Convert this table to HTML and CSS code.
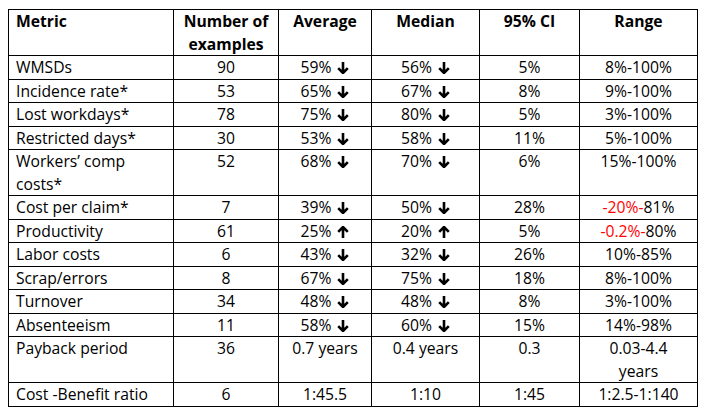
FILE: index.html
```html
<!DOCTYPE html>
<html lang="en">
<head>
<meta charset="utf-8">
<title>Ergonomics outcomes</title>
<link rel="stylesheet" href="styles.css">
</head>
<body>
<div class="page">
  <div class="table" role="table">
    <div class="row head" role="row">
      <div class="cell metric">Metric</div>
      <div class="cell">Number of examples</div>
      <div class="cell">Average</div>
      <div class="cell">Median</div>
      <div class="cell">95% CI</div>
      <div class="cell">Range</div>
    </div>
    <div class="row" role="row">
      <div class="cell metric">WMSDs</div>
      <div class="cell">90</div>
      <div class="cell">59% <svg class="arrow" viewBox="0 0 12 12"><path d="M6 0V11M1.2 6.2L6 11L10.8 6.2"/></svg></div>
      <div class="cell">56% <svg class="arrow" viewBox="0 0 12 12"><path d="M6 0V11M1.2 6.2L6 11L10.8 6.2"/></svg></div>
      <div class="cell">5%</div>
      <div class="cell">8%-100%</div>
    </div>
    <div class="row" role="row">
      <div class="cell metric">Incidence rate*</div>
      <div class="cell">53</div>
      <div class="cell">65% <svg class="arrow" viewBox="0 0 12 12"><path d="M6 0V11M1.2 6.2L6 11L10.8 6.2"/></svg></div>
      <div class="cell">67% <svg class="arrow" viewBox="0 0 12 12"><path d="M6 0V11M1.2 6.2L6 11L10.8 6.2"/></svg></div>
      <div class="cell">8%</div>
      <div class="cell">9%-100%</div>
    </div>
    <div class="row" role="row">
      <div class="cell metric">Lost workdays*</div>
      <div class="cell">78</div>
      <div class="cell">75% <svg class="arrow" viewBox="0 0 12 12"><path d="M6 0V11M1.2 6.2L6 11L10.8 6.2"/></svg></div>
      <div class="cell">80% <svg class="arrow" viewBox="0 0 12 12"><path d="M6 0V11M1.2 6.2L6 11L10.8 6.2"/></svg></div>
      <div class="cell">5%</div>
      <div class="cell">3%-100%</div>
    </div>
    <div class="row" role="row">
      <div class="cell metric">Restricted days*</div>
      <div class="cell">30</div>
      <div class="cell">53% <svg class="arrow" viewBox="0 0 12 12"><path d="M6 0V11M1.2 6.2L6 11L10.8 6.2"/></svg></div>
      <div class="cell">58% <svg class="arrow" viewBox="0 0 12 12"><path d="M6 0V11M1.2 6.2L6 11L10.8 6.2"/></svg></div>
      <div class="cell">11%</div>
      <div class="cell">5%-100%</div>
    </div>
    <div class="row" role="row">
      <div class="cell metric">Workers’ comp costs*</div>
      <div class="cell">52</div>
      <div class="cell">68% <svg class="arrow" viewBox="0 0 12 12"><path d="M6 0V11M1.2 6.2L6 11L10.8 6.2"/></svg></div>
      <div class="cell">70% <svg class="arrow" viewBox="0 0 12 12"><path d="M6 0V11M1.2 6.2L6 11L10.8 6.2"/></svg></div>
      <div class="cell">6%</div>
      <div class="cell">15%-100%</div>
    </div>
    <div class="row" role="row">
      <div class="cell metric">Cost per claim*</div>
      <div class="cell">7</div>
      <div class="cell">39% <svg class="arrow" viewBox="0 0 12 12"><path d="M6 0V11M1.2 6.2L6 11L10.8 6.2"/></svg></div>
      <div class="cell">50% <svg class="arrow" viewBox="0 0 12 12"><path d="M6 0V11M1.2 6.2L6 11L10.8 6.2"/></svg></div>
      <div class="cell">28%</div>
      <div class="cell"><span class="neg">-20%-</span>81%</div>
    </div>
    <div class="row" role="row">
      <div class="cell metric">Productivity</div>
      <div class="cell">61</div>
      <div class="cell">25% <svg class="arrow" viewBox="0 0 12 12"><path d="M6 12V1M1.2 5.8L6 1L10.8 5.8"/></svg></div>
      <div class="cell">20% <svg class="arrow" viewBox="0 0 12 12"><path d="M6 12V1M1.2 5.8L6 1L10.8 5.8"/></svg></div>
      <div class="cell">5%</div>
      <div class="cell"><span class="neg">-0.2%-</span>80%</div>
    </div>
    <div class="row" role="row">
      <div class="cell metric">Labor costs</div>
      <div class="cell">6</div>
      <div class="cell">43% <svg class="arrow" viewBox="0 0 12 12"><path d="M6 0V11M1.2 6.2L6 11L10.8 6.2"/></svg></div>
      <div class="cell">32% <svg class="arrow" viewBox="0 0 12 12"><path d="M6 0V11M1.2 6.2L6 11L10.8 6.2"/></svg></div>
      <div class="cell">26%</div>
      <div class="cell">10%-85%</div>
    </div>
    <div class="row" role="row">
      <div class="cell metric">Scrap/errors</div>
      <div class="cell">8</div>
      <div class="cell">67% <svg class="arrow" viewBox="0 0 12 12"><path d="M6 0V11M1.2 6.2L6 11L10.8 6.2"/></svg></div>
      <div class="cell">75% <svg class="arrow" viewBox="0 0 12 12"><path d="M6 0V11M1.2 6.2L6 11L10.8 6.2"/></svg></div>
      <div class="cell">18%</div>
      <div class="cell">8%-100%</div>
    </div>
    <div class="row" role="row">
      <div class="cell metric">Turnover</div>
      <div class="cell">34</div>
      <div class="cell">48% <svg class="arrow" viewBox="0 0 12 12"><path d="M6 0V11M1.2 6.2L6 11L10.8 6.2"/></svg></div>
      <div class="cell">48% <svg class="arrow" viewBox="0 0 12 12"><path d="M6 0V11M1.2 6.2L6 11L10.8 6.2"/></svg></div>
      <div class="cell">8%</div>
      <div class="cell">3%-100%</div>
    </div>
    <div class="row" role="row">
      <div class="cell metric">Absenteeism</div>
      <div class="cell">11</div>
      <div class="cell">58% <svg class="arrow" viewBox="0 0 12 12"><path d="M6 0V11M1.2 6.2L6 11L10.8 6.2"/></svg></div>
      <div class="cell">60% <svg class="arrow" viewBox="0 0 12 12"><path d="M6 0V11M1.2 6.2L6 11L10.8 6.2"/></svg></div>
      <div class="cell">15%</div>
      <div class="cell">14%-98%</div>
    </div>
    <div class="row" role="row">
      <div class="cell metric">Payback period</div>
      <div class="cell">36</div>
      <div class="cell">0.7 years</div>
      <div class="cell">0.4 years</div>
      <div class="cell">0.3</div>
      <div class="cell">0.03-4.4<br>years</div>
    </div>
    <div class="row" role="row">
      <div class="cell metric">Cost -Benefit ratio</div>
      <div class="cell">6</div>
      <div class="cell">1:45.5</div>
      <div class="cell">1:10</div>
      <div class="cell">1:45</div>
      <div class="cell">1:2.5-1:140</div>
    </div>
  </div>
</div>
</body>
</html>
```

FILE: styles.css
```css
html, body {
  margin: 0;
  background: #fff;
}

.page {
  padding: 9px 0 0 8px;
}

.table {
  display: grid;
  grid-template-columns: 165px 105px 93px 108px 100px 118px;
  width: 690px;
  box-sizing: border-box;
  border-left: 1px solid #000;
  border-top: 1px solid #000;
  font-family: "Open Sans", "Liberation Sans", sans-serif;
  font-size: 15.7px;
  line-height: 22.5px;
  color: #000;
}

.row {
  display: contents;
}

.cell {
  box-sizing: border-box;
  border-right: 1px solid #000;
  border-bottom: 1px solid #000;
  padding: 0 7px;
  text-align: center;
}

.cell.metric {
  text-align: left;
}

.head .cell {
  font-weight: 700;
}

.arrow {
  width: 12px;
  height: 12px;
  margin-left: 2px;
  vertical-align: -1px;
  fill: none;
  stroke: #000;
  stroke-width: 2.6;
}

.neg {
  color: #f00;
}
```
